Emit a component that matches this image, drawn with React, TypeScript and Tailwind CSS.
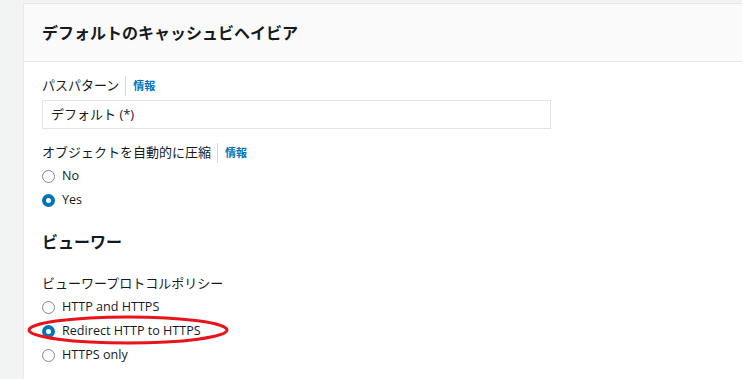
import React from "react";

const font = { fontFamily: '"Open Sans", "Noto Sans CJK JP", sans-serif' };

function Radio({ checked, label }: { checked?: boolean; label: string }) {
  return (
    <div className="flex items-center h-[24px]">
      {checked ? (
        <span className="w-[13px] h-[13px] rounded-full bg-[#0073bb] flex items-center justify-center">
          <span className="w-[5px] h-[5px] rounded-full bg-white" />
        </span>
      ) : (
        <span className="w-[13px] h-[13px] rounded-full border border-[#7d8a8b] bg-white" />
      )}
      <span className="ml-[7px] text-[12.6px] text-[#16191f]">{label}</span>
    </div>
  );
}

function Label({ text }: { text: string }) {
  return (
    <div className="flex items-center text-[13px] text-[#16191f]">
      <span>{text}</span>
      <span className="ml-[6px] mr-[7px] w-px h-[20px] bg-[#d5dbdb]" />
      <span className="text-[11px] font-bold text-[#0073bb]">情報</span>
    </div>
  );
}

export default function App() {
  return (
    <div style={font} className="w-[742px] h-[379px] overflow-hidden bg-[#f2f3f3] pl-[23px] pt-[3px]">
      <div className="relative h-full bg-white border-l border-t border-[#e8eaea]">
        <div className="h-[58px] bg-[#fafafa] border-b border-[#e4e6e6] flex items-center pl-[18px]">
          <h2 className="text-[16px] font-bold text-[#16191f]">デフォルトのキャッシュビヘイビア</h2>
        </div>
        <div className="pl-[18px] pt-[14px]">
          <Label text="パスパターン" />
          <div className="mt-[4px] w-[509px] h-[29px] border border-[#e2e4e4] flex items-center pl-[8px] text-[13px] text-[#16191f]">
            デフォルト (*)
          </div>
          <div className="mt-[14px]">
            <Label text="オブジェクトを自動的に圧縮" />
          </div>
          <div className="mt-[1px]">
            <Radio label="No" />
            <Radio checked label="Yes" />
          </div>
          <h3 className="mt-[18px] text-[16px] font-bold text-[#16191f]">ビューワー</h3>
          <div className="mt-[20px] text-[13px] text-[#16191f]">ビューワープロトコルポリシー</div>
          <div className="mt-[2px]">
            <Radio label="HTTP and HTTPS" />
            <Radio checked label="Redirect HTTP to HTTPS" />
            <Radio label="HTTPS only" />
          </div>
        </div>
        <svg className="absolute left-0 top-0 pointer-events-none" width="719" height="376">
          <ellipse cx="104" cy="326" rx="99" ry="13" fill="none" stroke="#e8141b" strokeWidth="3" />
        </svg>
      </div>
    </div>
  );
}
